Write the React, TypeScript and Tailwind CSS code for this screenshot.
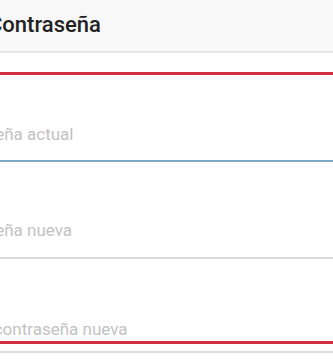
import { useState } from "react";

const FIELDS = [
  { key: "current", placeholder: "Contraseña actual", pad: "pt-[47px] pb-[14px]", line: "border-b-2 border-[#7ea9c6]" },
  { key: "next", placeholder: "Contraseña nueva", pad: "pt-[56px] pb-[15px]", line: "border-b-2 border-[#dcdcdc]" },
  { key: "repeat", placeholder: "Repetir contraseña nueva", pad: "pt-[58px]", line: "" },
];

export default function App() {
  const [values, setValues] = useState<Record<string, string>>({});
  const font = { fontFamily: "Roboto, 'Noto Sans', sans-serif" };

  return (
    <div className="h-[360px] w-[333px] overflow-hidden bg-white" style={font}>
      <div className="flex h-[53px] items-center border-b-2 border-[#e6e6e6] bg-[#f8f8f8]">
        <span className="-ml-[12px] pb-[3px] text-[22px] font-medium text-[#222]">
          Contraseña
        </span>
      </div>
      <div className="h-[19px]" />
      {/* red highlight box round the three fields */}
      <div className="border-y-[3px] border-[#cf2f3e]">
        {FIELDS.map((f) => (
          <div key={f.key} className={`${f.line} ${f.pad}`}>
            <input
              type="password"
              placeholder={f.placeholder}
              value={values[f.key] ?? ""}
              onChange={(e) => setValues({ ...values, [f.key]: e.target.value })}
              className="-ml-[64px] block h-6 w-[397px] bg-transparent text-[17px] leading-6 text-[#333] outline-none placeholder:text-[#c2c2c2]"
            />
          </div>
        ))}
      </div>
      <div className="h-[9px] border-b-2 border-[#dcdcdc]" />
    </div>
  );
}
